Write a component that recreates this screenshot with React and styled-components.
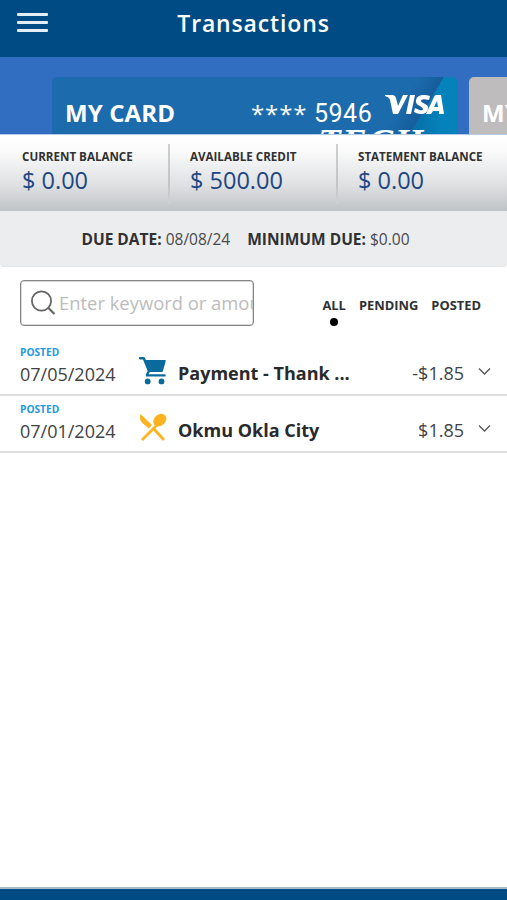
import React from "react";
import styled, { createGlobalStyle } from "styled-components";

const GlobalStyle = createGlobalStyle`
  *, *::before, *::after { box-sizing: border-box; }
  body { margin: 0; background: #fff; font-family: "Open Sans", "Noto Sans", sans-serif; color: #303133; }
  button { border: 0; padding: 0; background: none; font: inherit; color: inherit; display: block; }
`;

const Screen = styled.div`
  height: 900px;
  width: 100%;
  max-width: 507px;
  display: flex;
  flex-direction: column;
  overflow: hidden;
  white-space: nowrap;
`;

const Header = styled.header`
  height: 57px;
  flex: none;
  display: grid;
  grid-template-columns: 65px 1fr 65px;
  background: #004b84;
  color: #fff;
`;

const MenuButton = styled.button`
  width: 31px;
  height: 19px;
  margin: 13px 0 0 17px;
  display: flex;
  flex-direction: column;
  justify-content: space-between;
`;

const MenuBar = styled.span`
  width: 31px;
  height: 3px;
  border-radius: 1px;
  background: #e6eefa;
`;

const Title = styled.h1`
  margin: 7px 0 0;
  text-align: center;
  font-size: 23px;
  line-height: 32px;
  font-weight: 600;
  letter-spacing: 0.85px;
`;

const Carousel = styled.section`
  height: 78px;
  flex: none;
  display: flex;
  gap: 12px;
  padding: 20px 0 0 52px;
  overflow: hidden;
  background: #316dc1;
  border-bottom: 1px solid #b3cbe3;
`;

const Card = styled.article`
  position: relative;
  flex: none;
  width: 405px;
  height: 230px;
  border-radius: 5px;
  overflow: hidden;
  color: #fff;
  background: ${(p) => (p.$muted ? "#bebcbd" : "#1c6bad")};
`;

const CardArt = styled.svg`
  position: absolute;
  inset: 0;
  width: 405px;
  height: 58px;
`;

const CardLine = styled.div`
  position: relative;
  display: flex;
  align-items: flex-start;
  height: 52px;
  padding: 20px 0 0 13px;
`;

const CardName = styled.span`
  width: 186px;
  font-size: 24px;
  line-height: 32px;
  font-weight: 700;
  letter-spacing: 0.1px;
`;

const CardMask = styled.span`
  width: 63px;
  padding-top: 1px;
  font-size: 24px;
  line-height: 32px;
  letter-spacing: 0.9px;
`;

const CardDigits = styled.span`
  width: 68px;
  padding-top: 1px;
  font-family: Roboto, sans-serif;
  font-size: 25px;
  line-height: 32px;
  letter-spacing: 0.5px;
`;

const VisaLogo = styled.svg`
  width: 60px;
  height: 23px;
  margin-top: -3px;
  margin-left: 3px;
`;

const Brand = styled.div`
  position: relative;
  padding-left: 266px;
  font: italic bold 37px/34px "Liberation Serif", serif;
  letter-spacing: 1.5px;
  margin-top: -3px;
`;

const Balances = styled.section`
  height: 76px;
  flex: none;
  display: grid;
  grid-template-columns: 170px 168px 169px;
  padding-top: 9px;
  background: linear-gradient(#fff 0%, #fafafa 22%, #dfe1e3 65%, #c0c3c6 100%);
`;

const Balance = styled.div`
  height: 60px;
  padding: 4px 0 0 ${(p) => (p.$first ? "22px" : "20px")};
  border-right: 2px solid transparent;
  border-image: ${(p) => (p.$last ? "none" : "linear-gradient(#cdcfd1, #c2c5c8 65%, #cfd1d3) 1")};
`;

const BalanceLabel = styled.div`
  font-size: 11.6px;
  line-height: 17px;
  font-weight: 700;
`;

const BalanceValue = styled.div`
  font-size: 23.5px;
  line-height: 31px;
  color: #204682;
`;

const DueBar = styled.section`
  height: 56px;
  flex: none;
  display: flex;
  justify-content: center;
  gap: 17px;
  padding: 17px 16px 0 0;
  border-bottom: 1px solid #e3e4e6;
  border-radius: 0 0 4px 4px;
  background: #ecedef;
  font-size: 15.5px;
  line-height: 23px;
  color: #48494b;
`;

const DueLabel = styled.strong`
  color: #303133;
  font-weight: 700;
`;

const Tools = styled.section`
  height: 72px;
  flex: none;
  display: flex;
  justify-content: space-between;
  padding: 13px 26px 0 20px;
`;

const SearchBox = styled.label`
  width: 234px;
  height: 46px;
  display: flex;
  align-items: center;
  padding-left: 10px;
  overflow: hidden;
  border: 1px solid #858585;
  box-shadow: inset 0 0 0 0.5px #b5b5b5;
  border-radius: 4px;
`;

const SearchIcon = styled.svg`
  width: 26px;
  height: 26px;
  flex: none;
`;

const SearchInput = styled.input`
  flex: 1;
  min-width: 0;
  height: 40px;
  border: 0;
  outline: 0;
  padding: 0 0 1px 2px;
  background: transparent;
  font: 18.4px "Open Sans", sans-serif;
  &::placeholder { color: #bcbcbc; opacity: 1; }
`;

const Filters = styled.nav`
  display: flex;
  gap: 13px;
  padding-top: 16px;
`;

const Filter = styled.button`
  display: flex;
  flex-direction: column;
  align-items: center;
  height: 32px;
  font-size: 12.9px;
  line-height: 18px;
  font-weight: 700;
`;

const ActiveDot = styled.span`
  width: 8px;
  height: 8px;
  margin-top: 4px;
  border-radius: 50%;
  background: #000;
`;

const Row = styled.article`
  height: 57px;
  flex: none;
  display: grid;
  grid-template-columns: 119px 39px 200px 1fr 27px;
  padding: 5px 16px 0 20px;
  border-bottom: 2px solid #dedede;
`;

const Status = styled.div`
  font-size: 10.2px;
  line-height: 16px;
  font-weight: 700;
  color: #2498e3;
`;

const TransactionDate = styled.div`
  margin-top: 2px;
  font-size: 18px;
  line-height: 25px;
  color: #414244;
`;

const Category = styled.div`
  width: 30px;
  height: 42px;
  padding-top: 12px;
  svg { display: block; }
`;

const Merchant = styled.div`
  padding-top: 17px;
  font-size: 18px;
  line-height: 25px;
  font-weight: 700;
  color: #292a2c;
`;

const Amount = styled.div`
  padding-top: 17px;
  text-align: right;
  font-size: 18px;
  line-height: 25px;
  color: #414244;
`;

const ExpandButton = styled.button`
  width: 13px;
  height: 9px;
  margin: 23px 0 0 14px;
  svg { display: block; }
`;

const Footer = styled.footer`
  height: 13px;
  flex: none;
  margin-top: auto;
  border-top: 2px solid #a6bbc8;
  background: #004b84;
`;

function Visa() {
  return (
    <VisaLogo viewBox="0 0 60 23" role="img" aria-label="VISA">
      <path d="M0 1h7q3 0 4 3l2 8 5-11h5L13 20H8L5 6Q4 3 0 2Z M25 1h5l-4 19h-5Z M45 2l-1 4q-8-2-8 1 0 1 4 3 4 2 3 5-1 5-7 5-4 0-7-2l1-4q8 4 8 1 0-1-3-3-5-2-4-6 1-5 8-5 3 0 6 1Z M51 1h5l3 19h-5v-3h-6l-2 3h-5L49 3q1-2 2-2Zm1 6-3 6h4Z" fill="#fff" fillRule="evenodd" />
    </VisaLogo>
  );
}

function Cart() {
  return (
    <svg width="29" height="29" viewBox="0 0 29 29" aria-hidden="true">
      <path d="M1 2.2h3.8L10 15l-2 3.8v.6h17.5" fill="none" stroke="#096b9c" strokeWidth="2.4" strokeLinecap="round" strokeLinejoin="round" />
      <path d="M5 4h20.7q1.3 0 1 1.3L24 14.7q-.3 1.3-1.5 1.3H9.5Z" fill="#096b9c" />
      <circle cx="8.7" cy="25.4" r="2.9" fill="#096b9c" />
      <circle cx="22.5" cy="25.4" r="2.9" fill="#096b9c" />
    </svg>
  );
}

function Utensils() {
  return (
    <svg width="29" height="29" viewBox="0 0 29 29" aria-hidden="true">
      <path d="m4 26 14-14M15 16l9 10" fill="none" stroke="#fcb320" strokeWidth="2.8" strokeLinecap="square" />
      <ellipse cx="20.8" cy="7.2" rx="7.2" ry="5.6" transform="rotate(-42 20.8 7.2)" fill="#fcb320" />
      <path d="M1.5 1.1 13 12l-3.2 3.5-7-6Q-.2 6 1.5 1.1Z" fill="#fcb320" />
    </svg>
  );
}

const transactions = [
  { date: "07/05/2024", merchant: "Payment - Thank ...", amount: "-$1.85", category: "shopping" },
  { date: "07/01/2024", merchant: "Okmu Okla City", amount: "$1.85", category: "food" },
];

const balances = [
  ["CURRENT BALANCE", "$ 0.00"],
  ["AVAILABLE CREDIT", "$ 500.00"],
  ["STATEMENT BALANCE", "$ 0.00"],
];

export default function App() {
  return (
    <Screen>
      <GlobalStyle />
      <Header>
        <MenuButton aria-label="Menu"><MenuBar /><MenuBar /><MenuBar /></MenuButton>
        <Title>Transactions</Title>
      </Header>
      <Carousel>
        <Card>
          <CardArt viewBox="0 0 405 58" aria-hidden="true">
            <defs>
              <linearGradient id="foldShade" x1="0" y1="0" x2="1" y2="0.5">
                <stop offset="0.5" stopColor="#1c6bad" />
                <stop offset="0.85" stopColor="#145a98" />
              </linearGradient>
              <linearGradient id="cornerShade">
                <stop offset="0" stopColor="#066ba4" />
                <stop offset="0.65" stopColor="#0682ba" />
              </linearGradient>
            </defs>
            <path d="M355 0h37l-35 58h-35Z" fill="url(#foldShade)" />
            <path d="M392 0h13v58h-47Z" fill="url(#cornerShade)" />
          </CardArt>
          <CardLine>
            <CardName>MY CARD</CardName>
            <CardMask>****</CardMask>
            <CardDigits>5946</CardDigits>
            <Visa />
          </CardLine>
          <Brand>TECH</Brand>
        </Card>
        <Card $muted><CardLine><CardName>MY CARD</CardName></CardLine></Card>
      </Carousel>
      <Balances>
        {balances.map(([label, value], index) => (
          <Balance key={label} $first={index === 0} $last={index === 2}>
            <BalanceLabel>{label}</BalanceLabel>
            <BalanceValue>{value}</BalanceValue>
          </Balance>
        ))}
      </Balances>
      <DueBar>
        <div><DueLabel>DUE DATE:</DueLabel> 08/08/24</div>
        <div><DueLabel>MINIMUM DUE:</DueLabel> $0.00</div>
      </DueBar>
      <Tools>
        <SearchBox>
          <SearchIcon viewBox="0 0 26 26" fill="none" stroke="#666" strokeWidth="1.8">
            <circle cx="10.5" cy="11" r="9.6" /><path d="m17.5 18 6 6" strokeWidth="2.2" />
          </SearchIcon>
          <SearchInput placeholder="Enter keyword or amount" aria-label="Search transactions" />
        </SearchBox>
        <Filters>
          <Filter>ALL<ActiveDot /></Filter>
          <Filter>PENDING</Filter>
          <Filter>POSTED</Filter>
        </Filters>
      </Tools>
      {transactions.map((item) => (
        <Row key={item.date}>
          <div><Status>POSTED</Status><TransactionDate>{item.date}</TransactionDate></div>
          <Category>{item.category === "shopping" ? <Cart /> : <Utensils />}</Category>
          <Merchant>{item.merchant}</Merchant>
          <Amount>{item.amount}</Amount>
          <ExpandButton aria-label="Show details">
            <svg width="13" height="9" viewBox="0 0 13 9" fill="none" stroke="#555" strokeWidth="1.3"><path d="m1 1.5 5.5 5.5L12 1.5" /></svg>
          </ExpandButton>
        </Row>
      ))}
      <Footer />
    </Screen>
  );
}
